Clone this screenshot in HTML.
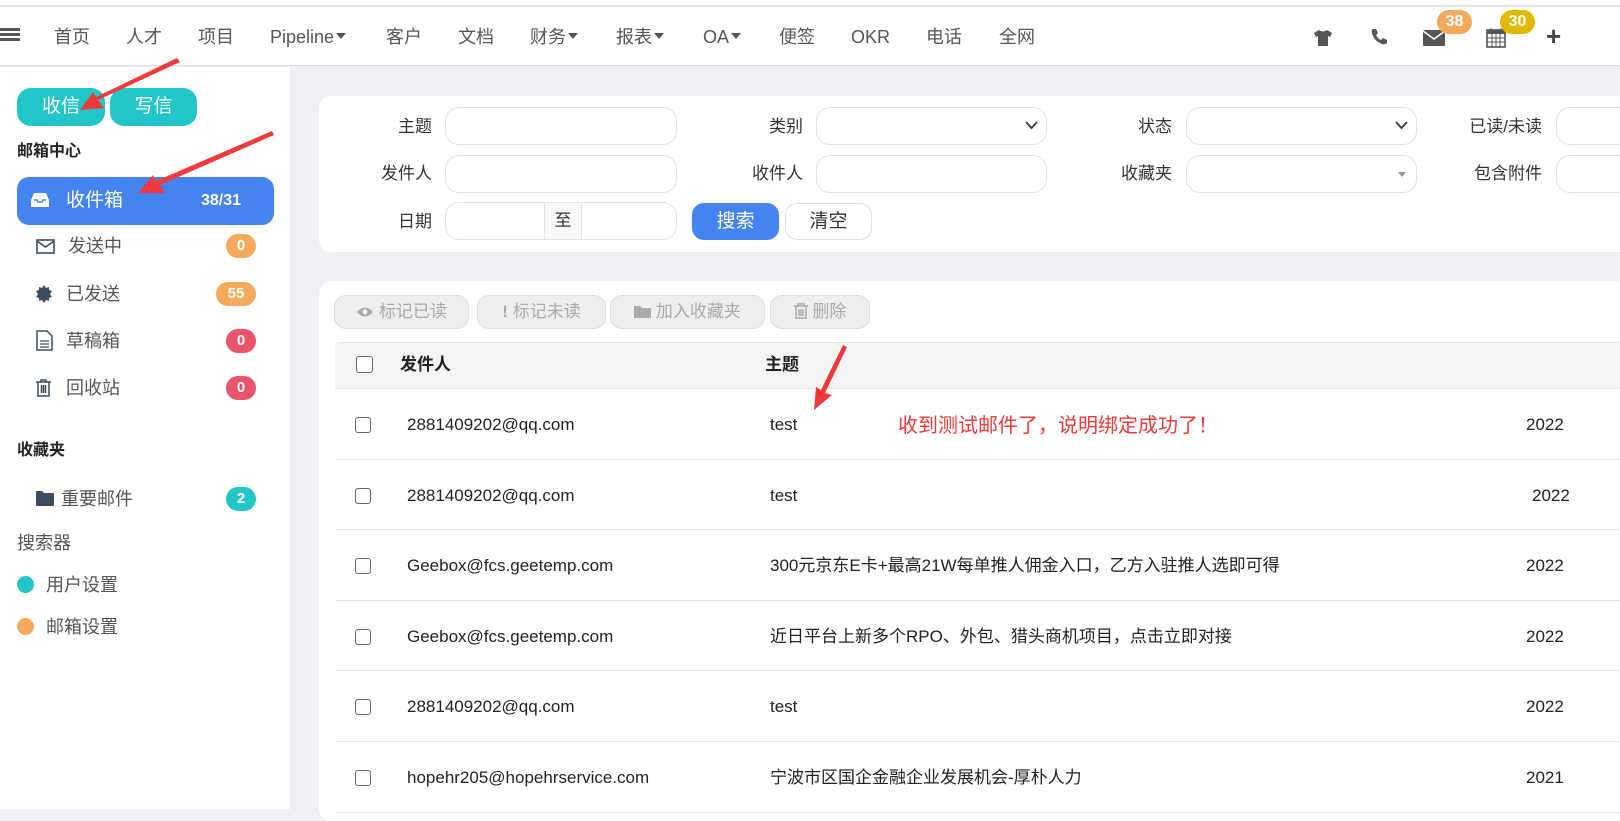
<!DOCTYPE html>
<html><head><meta charset="utf-8"><style>
*{box-sizing:border-box;margin:0;padding:0}
body{width:1620px;height:809px;overflow:hidden;background:#eff0f4;font-family:"Liberation Sans","Noto Sans CJK SC",sans-serif;position:relative;color:#333}
.a{position:absolute;line-height:1.25}
#top{left:0;top:0;width:1620px;height:66px;background:#fff;border-bottom:1px solid #ddd}
#top:before{content:"";position:absolute;left:0;top:5px;width:1620px;height:2px;background:#e2e2e2}
.nav{top:24px;font-size:18px;color:#555;line-height:26px;height:26px;white-space:nowrap}
.car{display:inline-block;border-left:5px solid transparent;border-right:5px solid transparent;border-top:6px solid #555;vertical-align:middle;margin-left:2px;position:relative;top:-2px}
#side{left:0;top:67px;width:290px;height:742px;background:#fff}
.btn{border-radius:14px;background:#22c6c8;color:#fff;font-size:19px;text-align:center;line-height:38px;height:38px}
.si{font-size:18px;color:#555;line-height:24px}
.bd{border-radius:12px;color:#fff;font-weight:bold;font-size:15px;text-align:center;height:24px;line-height:24px}
.card{background:#fff;border-radius:12px}
.lbl{font-size:17px;color:#333;text-align:right;width:120px;line-height:24px}
.inp{height:38px;border:1px solid #e2e2e2;border-radius:14px;background:#fff}
.tb{height:34px;border:1px solid #ddd;border-radius:12px;background:#eee;color:#aaa;font-size:17px;line-height:32px;text-align:center;white-space:nowrap}
.row{left:335px;width:1285px;height:71px;border-bottom:1px solid #e8e8e8;background:#fff;font-size:17px;color:#222}
.cb{position:absolute;left:20px;width:16px;height:16px;border:1.5px solid #666;border-radius:3px;top:28px}
.row span{position:absolute;top:24px;line-height:24px;height:24px;white-space:nowrap}
</style></head><body>
<div id="top" class="a">
<div class="a" style="left:0;top:28px;width:20px"><div style="height:3px;background:#555;margin-bottom:2px"></div><div style="height:3px;background:#555;margin-bottom:2px"></div><div style="height:3px;background:#555"></div></div>
<div class="a nav" style="left:54px">首页</div>
<div class="a nav" style="left:126px">人才</div>
<div class="a nav" style="left:198px">项目</div>
<div class="a nav" style="left:270px">Pipeline<span class="car"></span></div>
<div class="a nav" style="left:386px">客户</div>
<div class="a nav" style="left:458px">文档</div>
<div class="a nav" style="left:530px">财务<span class="car"></span></div>
<div class="a nav" style="left:616px">报表<span class="car"></span></div>
<div class="a nav" style="left:703px">OA<span class="car"></span></div>
<div class="a nav" style="left:779px">便签</div>
<div class="a nav" style="left:851px">OKR</div>
<div class="a nav" style="left:926px">电话</div>
<div class="a nav" style="left:999px">全网</div>
<svg class="a" style="left:1313px;top:29px" width="20" height="18" viewBox="0 0 20 18"><path d="M6 1 L1 4 L3 8 L5 7 L5 17 L15 17 L15 7 L17 8 L19 4 L14 1 Q10 4 6 1Z" fill="#555"/></svg>
<svg class="a" style="left:1370px;top:28px" width="18" height="18" viewBox="0 0 18 18"><path d="M3 1 L6 1 L8 5 L6 7 Q8 11 11 12 L13 10 L17 12 L17 15 Q15 17 12 16 Q4 13 2 5 Q1 2 3 1Z" fill="#555"/></svg>
<svg class="a" style="left:1423px;top:30px" width="22" height="16" viewBox="0 0 22 16"><rect x="0" y="0" width="22" height="16" rx="1" fill="#555"/><path d="M0 1 L11 9 L22 1" stroke="#fff" stroke-width="1.6" fill="none"/></svg>
<div class="a bd" style="left:1437px;top:10px;width:35px;background:#f5a95a;font-size:16px">38</div>
<svg class="a" style="left:1486px;top:27px" width="20" height="21" viewBox="0 0 20 21"><rect x="1" y="3" width="18" height="17" fill="none" stroke="#555" stroke-width="1.6"/><rect x="1" y="3" width="18" height="4" fill="#555"/><path d="M5 1V5M15 1V5M1 11H19M1 15H19M6 7V20M10 7V20M14 7V20" stroke="#555" stroke-width="1"/></svg>
<div class="a bd" style="left:1500px;top:10px;width:35px;background:#e0b800;font-size:16px">30</div>
<div class="a" style="left:1546px;top:20px;font-size:26px;font-weight:bold;color:#444">+</div>
</div>

<div id="side" class="a">
<div class="a btn" style="left:17px;top:21px;width:88px">收信</div>
<div class="a btn" style="left:110px;top:21px;width:87px">写信</div>
<div class="a" style="left:17px;top:74px;font-size:16px;font-weight:bold;color:#222;line-height:22px">邮箱中心</div>
<div class="a" style="left:17px;top:110px;width:257px;height:48px;background:#4384f0;border-radius:12px;color:#fff">
<svg class="a" style="left:14px;top:15px" width="18" height="16" viewBox="0 0 18 16"><path d="M3 1 H15 L18 8 V15 H0 V8Z" fill="#fff"/><path d="M3 8 H6 L7 10 H11 L12 8 H15" stroke="#4384f0" stroke-width="1.6" fill="none"/></svg>
<div class="a" style="left:49px;top:11px;font-size:19px;line-height:26px">收件箱</div>
<div class="a" style="left:184px;top:13px;font-size:16px;font-weight:bold;line-height:22px">38/31</div>
</div>
<svg class="a" style="left:36px;top:172px" width="19" height="15" viewBox="0 0 19 15"><rect x="1" y="1" width="17" height="13" fill="none" stroke="#3d4b5e" stroke-width="1.6"/><path d="M1 2 L9.5 8 L18 2" fill="none" stroke="#3d4b5e" stroke-width="1.6"/></svg>
<div class="a si" style="left:68px;top:167px">发送中</div><div class="a bd" style="left:226px;top:167px;width:30px;background:#f5a95a">0</div>
<svg class="a" style="left:35px;top:218px" width="18" height="18" viewBox="0 0 18 18"><path d="M9 0 L11 3 L14 2 L14 5 L17 6 L15 9 L17 12 L14 13 L14 16 L11 15 L9 18 L7 15 L4 16 L4 13 L1 12 L3 9 L1 6 L4 5 L4 2 L7 3Z" fill="#3d4b5e"/></svg>
<div class="a si" style="left:66px;top:215px">已发送</div><div class="a bd" style="left:216px;top:215px;width:40px;background:#f5a95a">55</div>
<svg class="a" style="left:36px;top:263px" width="17" height="21" viewBox="0 0 17 21"><path d="M1 1 H11 L16 6 V20 H1Z" fill="none" stroke="#3d4b5e" stroke-width="1.5"/><path d="M4 11H13M4 14H13M4 17H13" stroke="#3d4b5e" stroke-width="1.3"/></svg>
<div class="a si" style="left:66px;top:262px">草稿箱</div><div class="a bd" style="left:226px;top:262px;width:30px;background:#e9546a">0</div>
<svg class="a" style="left:36px;top:312px" width="15" height="18" viewBox="0 0 15 18"><path d="M0 3H15M5 3V1H10V3M2 3V17H13V3M5.5 6V14M7.5 6V14M9.5 6V14" fill="none" stroke="#3d4b5e" stroke-width="1.5"/></svg>
<div class="a si" style="left:66px;top:309px">回收站</div><div class="a bd" style="left:226px;top:309px;width:30px;background:#e9546a">0</div>
<div class="a" style="left:17px;top:373px;font-size:16px;font-weight:bold;color:#222;line-height:22px">收藏夹</div>
<svg class="a" style="left:36px;top:424px" width="18" height="15" viewBox="0 0 18 15"><path d="M0 1 Q0 0 1 0 H6 L8 2 H17 Q18 2 18 3 V14 Q18 15 17 15 H1 Q0 15 0 14Z" fill="#3d4b5e"/></svg>
<div class="a si" style="left:61px;top:420px">重要邮件</div><div class="a bd" style="left:226px;top:420px;width:30px;background:#22c6c8">2</div>
<div class="a si" style="left:17px;top:464px">搜索器</div>
<div class="a" style="left:17px;top:509px;width:17px;height:17px;border-radius:50%;background:#22c6c8"></div><div class="a si" style="left:46px;top:506px">用户设置</div>
<div class="a" style="left:17px;top:551px;width:17px;height:17px;border-radius:50%;background:#f5a95a"></div><div class="a si" style="left:46px;top:548px">邮箱设置</div>
</div>

<div class="a card" style="left:319px;top:96px;width:1320px;height:156px"></div>
<div class="a lbl" style="left:312px;top:115px">主题</div><div class="a inp" style="left:445px;top:107px;width:232px"></div>
<div class="a lbl" style="left:683px;top:115px">类别</div><div class="a inp" style="left:816px;top:107px;width:231px"><svg class="a" style="right:8px;top:13px" width="13" height="9"><path d="M1 1 L6.5 7 L12 1" stroke="#444" stroke-width="2" fill="none"/></svg></div>
<div class="a lbl" style="left:1052px;top:115px">状态</div><div class="a inp" style="left:1186px;top:107px;width:231px"><svg class="a" style="right:8px;top:13px" width="13" height="9"><path d="M1 1 L6.5 7 L12 1" stroke="#444" stroke-width="2" fill="none"/></svg></div>
<div class="a lbl" style="left:1422px;top:115px">已读/未读</div><div class="a inp" style="left:1556px;top:107px;width:100px"></div>
<div class="a lbl" style="left:312px;top:162px">发件人</div><div class="a inp" style="left:445px;top:155px;width:232px"></div>
<div class="a lbl" style="left:683px;top:162px">收件人</div><div class="a inp" style="left:816px;top:155px;width:231px"></div>
<div class="a lbl" style="left:1052px;top:162px">收藏夹</div><div class="a inp" style="left:1186px;top:155px;width:231px"><div class="a" style="right:10px;top:16px;border-left:4px solid transparent;border-right:4px solid transparent;border-top:5px solid #999"></div></div>
<div class="a lbl" style="left:1422px;top:162px">包含附件</div><div class="a inp" style="left:1556px;top:155px;width:100px"></div>
<div class="a lbl" style="left:312px;top:210px">日期</div>
<div class="a inp" style="left:445px;top:202px;width:232px"><div class="a" style="left:98px;top:0;width:38px;height:36px;background:#f7f7f7;border-left:1px solid #e2e2e2;border-right:1px solid #e2e2e2;text-align:center;line-height:36px;font-size:17px">至</div></div>
<div class="a" style="left:692px;top:203px;width:87px;height:37px;border-radius:12px;background:#4384f0;color:#fff;font-size:19px;text-align:center;line-height:37px">搜索</div>
<div class="a" style="left:785px;top:203px;width:87px;height:37px;border-radius:12px;border:1px solid #ddd;background:#fff;color:#333;font-size:19px;text-align:center;line-height:35px">清空</div>

<div class="a card" style="left:319px;top:281px;width:1320px;height:540px"></div>
<div class="a tb" style="left:334px;top:295px;width:135px"><svg width="18" height="12" viewBox="0 0 18 12" style="vertical-align:-1px"><path d="M1 6 Q9 -3 17 6 Q9 15 1 6Z" fill="#aaa"/><circle cx="9" cy="6" r="2.5" fill="#eee"/></svg> 标记已读</div>
<div class="a tb" style="left:477px;top:295px;width:129px"><b>!</b> 标记未读</div>
<div class="a tb" style="left:610px;top:295px;width:155px"><svg width="17" height="13" viewBox="0 0 17 13" style="vertical-align:-1px"><path d="M0 1 H6 L8 3 H17 V13 H0Z" fill="#aaa"/></svg> 加入收藏夹</div>
<div class="a tb" style="left:770px;top:295px;width:100px"><svg width="14" height="16" viewBox="0 0 14 16" style="vertical-align:-2px"><path d="M0 3H14M4 3V1H10V3M2 3V15H12V3M5 6V13M7 6V13M9 6V13" fill="none" stroke="#aaa" stroke-width="1.5"/></svg> 删除</div>
<div class="a" style="left:335px;top:342px;width:1285px;height:47px;background:#f4f4f4;border-top:1px solid #e6e6e6;border-bottom:1px solid #e6e6e6;border-radius:6px 0 0 0">
<div class="a" style="left:21px;top:13px;width:17px;height:17px;border:1.5px solid #666;border-radius:3px;background:#fff"></div>
<div class="a" style="left:65px;top:10px;font-size:17px;font-weight:bold;color:#222;line-height:24px">发件人</div>
<div class="a" style="left:430px;top:10px;font-size:17px;font-weight:bold;color:#222;line-height:24px">主题</div>
</div>
<div class="a row" style="top:389px"><div class="cb"></div><span style="left:72px">2881409202@qq.com</span><span style="left:435px">test</span><span style="left:1191px">2022</span></div>
<div class="a row" style="top:460px;height:70px"><div class="cb"></div><span style="left:72px">2881409202@qq.com</span><span style="left:435px">test</span><span style="left:1197px">2022</span></div>
<div class="a row" style="top:530px"><div class="cb"></div><span style="left:72px">Geebox@fcs.geetemp.com</span><span style="left:435px">300元京东E卡+最高21W每单推人佣金入口，乙方入驻推人选即可得</span><span style="left:1191px">2022</span></div>
<div class="a row" style="top:601px;height:70px"><div class="cb"></div><span style="left:72px">Geebox@fcs.geetemp.com</span><span style="left:435px">近日平台上新多个RPO、外包、猎头商机项目，点击立即对接</span><span style="left:1191px">2022</span></div>
<div class="a row" style="top:671px"><div class="cb"></div><span style="left:72px">2881409202@qq.com</span><span style="left:435px">test</span><span style="left:1191px">2022</span></div>
<div class="a row" style="top:742px"><div class="cb"></div><span style="left:72px">hopehr205@hopehrservice.com</span><span style="left:435px">宁波市区国企金融企业发展机会-厚朴人力</span><span style="left:1191px">2021</span></div>

<div class="a" style="left:898px;top:412px;font-size:20px;color:#f0393b;line-height:28px">收到测试邮件了，说明绑定成功了！</div>
<svg class="a" style="left:0;top:0" width="1620" height="809"><g fill="#f0393b"><polygon points="177,58 180,62 98,100 104,108 80,110 93,92 96,97"/><polygon points="272,131 274,135 160,185 165,193 138,193 153,175 156,181"/><polygon points="843,345 847,347 825,393 832,395 814,410 816,387 821,390"/></g></svg>
</body></html>
